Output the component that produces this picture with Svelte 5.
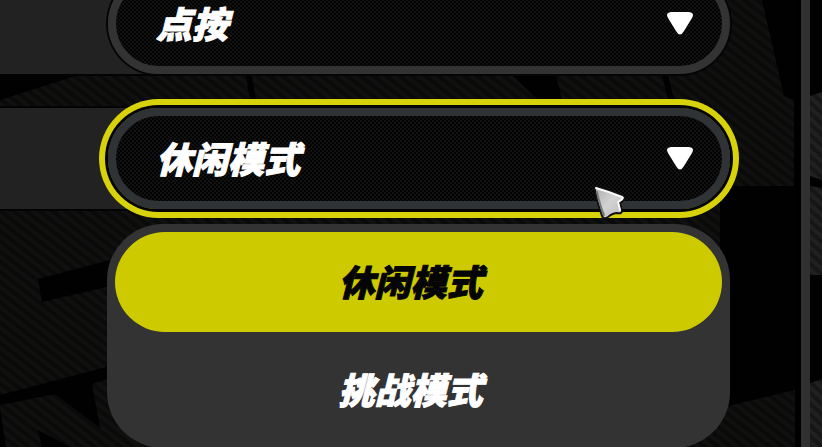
<script>
  let pressMode = $state('点按');
  let gameMode = $state('休闲模式');
  const pressModes = ['点按', '长按'];
  const gameModes = ['休闲模式', '挑战模式'];
</script>

{#snippet arrow()}
  <svg class="arrow" viewBox="0 0 28 24" aria-hidden="true">
    <path d="M5 1H23Q29 2 26 7L18 20Q14 27 10 20L2 7Q-1 2 5 1Z" fill="#fff" />
  </svg>
{/snippet}

<main>
  <svg class="backdrop" viewBox="0 0 822 447" preserveAspectRatio="xMidYMid slice" aria-hidden="true">
    <defs>
      <pattern id="stripes" width="8" height="8" patternUnits="userSpaceOnUse" patternTransform="rotate(38)">
        <rect width="8" height="8" fill="#0a0a0a" />
        <rect width="8" height="4" fill="#10100f" />
      </pattern>
      <pattern id="bright" width="8" height="8" patternUnits="userSpaceOnUse" patternTransform="rotate(42)">
        <rect width="8" height="8" fill="#161616" />
        <rect width="8" height="4" fill="#202020" />
      </pattern>
    </defs>
    <rect width="822" height="447" fill="url(#stripes)" />
    <g fill="#010101">
      <path d="M0 75H78L0 100Z" />
      <path d="M246 75H252L256 100H250Z" />
      <path d="M512 75H556L562 100H538Z" />
      <path d="M662 75H668L674 100H668Z" />
      <path d="M38 279L110 260V286L42 302Z" />
      <path d="M0 395L110 366V378L92 384L100 428L55 394L0 405Z" />
      <path d="M38 430L70 447H42Z" />
      <path d="M0 408L6 447H0Z" />
      <path d="M762 0H802V186H794V100L784 96Z" />
      <path d="M720 186H802V388L720 408Z" />
    </g>
    <rect x="795" width="6" height="447" fill="#000" />
    <rect x="810" width="12" height="447" fill="url(#bright)" />
    <g fill="#020202">
      <path d="M810 0H822V92L810 96Z" />
      <path d="M810 176L822 180V188L810 186Z" />
      <path d="M810 275H822V379L810 383Z" />
    </g>
  </svg>

  <section class="settings">
    <div class="row">
      <div class="field">
        <select aria-label="操作" bind:value={pressMode}>
          {#each pressModes as mode}<option>{mode}</option>{/each}
        </select>
        {@render arrow()}
      </div>
    </div>

    <div class="row">
      <div class="field active">
        <select aria-label="模式" bind:value={gameMode}>
          {#each gameModes as mode}<option>{mode}</option>{/each}
        </select>
        {@render arrow()}
        <svg class="cursor" viewBox="0 0 36 38" aria-hidden="true">
          <defs>
            <linearGradient id="metal" x1="0" y1="0" x2="1" y2="1">
              <stop offset="0" stop-color="#aaa" />
              <stop offset=".5" stop-color="#d2d2d2" />
              <stop offset="1" stop-color="#bbb" />
            </linearGradient>
          </defs>
          <path d="M2 2Q16 6 31 12Q34 14 31 17L28 19L30 27Q30 30 25 29Q21 29 16 33Q12 36 10 32Q5 18 2 2Z" fill="url(#metal)" stroke="#111" stroke-width="2" stroke-linejoin="round" />
          <path d="M4 4Q18 8 30 13Q32 14 29 16L26 18L28 26" fill="none" stroke="#f8f8f8" stroke-width="2" stroke-linecap="round" stroke-linejoin="round" />
          <path d="M5 8Q8 22 12 31" fill="none" stroke="#777" stroke-width="2" stroke-linecap="round" />
        </svg>
      </div>
    </div>

    <div class="menu" role="listbox" aria-label="模式">
      {#each gameModes as mode}
        <button
          type="button"
          role="option"
          aria-selected={gameMode === mode}
          class:selected={gameMode === mode}
          onclick={() => (gameMode = mode)}
        >{mode}</button>
      {/each}
    </div>
  </section>
  <div class="rail"></div>
</main>

<style>
  :global(body) {
    background: #050505;
  }
  main {
    position: relative;
    display: flex;
    height: 100vh;
    overflow: hidden;
    font-family: "Noto Sans CJK SC", sans-serif;
    font-size: 36px;
    font-weight: 900;
    font-style: italic;
    color: #fff;
    -webkit-text-stroke: 1px currentColor;
  }
  .backdrop {
    position: absolute;
    inset: 0;
    width: 100%;
    height: 100%;
  }
  .settings {
    position: relative;
    flex: 1;
    display: flex;
    flex-direction: column;
    margin-top: -27px;
  }
  .row {
    position: relative;
    padding: 0 71px 0 108px;
    margin-bottom: 34px;
  }
  .row::before {
    content: "";
    position: absolute;
    inset: 0 50% 0 0;
    background: #222;
    box-shadow: 0 0 0 2px #030303;
  }
  .field {
    position: relative;
    box-sizing: border-box;
    height: 101px;
    border: 8px solid #333;
    border-radius: 51px;
    background: repeating-conic-gradient(#030303 0 25%, #111 0 50%) 0 0 / 4px 4px;
    box-shadow: 0 0 0 2px #050505;
  }
  .field.active {
    border-color: #303335;
    box-shadow: 0 0 0 3px #050505, 0 0 0 9px #d8d20a;
  }
  select {
    appearance: none;
    display: block;
    width: 100%;
    height: 100%;
    padding: 0 80px 4px 40px;
    border: 0;
    border-radius: 43px;
    outline: 0;
    background: transparent;
    color: inherit;
    font: inherit;
  }
  option {
    background: #333;
  }
  .arrow {
    position: absolute;
    right: 28px;
    top: 30px;
    width: 28px;
    height: 24px;
    pointer-events: none;
  }
  .cursor {
    position: absolute;
    right: 94px;
    bottom: -21px;
    width: 36px;
    height: 38px;
    z-index: 2;
  }
  .menu {
    display: flex;
    flex-direction: column;
    gap: 8px;
    margin: -19px 71px 0 107px;
    padding: 8px;
    border-radius: 56px;
    background: #333;
  }
  .menu button {
    height: 100px;
    padding: 0 16px 4px 0;
    border: 0;
    border-radius: 50px;
    background: transparent;
    color: inherit;
    font: inherit;
  }
  .menu button.selected {
    background: #cdca00;
    color: #050505;
  }
  .rail {
    position: relative;
    width: 9px;
    margin-right: 12px;
    background: #303030;
  }
</style>
